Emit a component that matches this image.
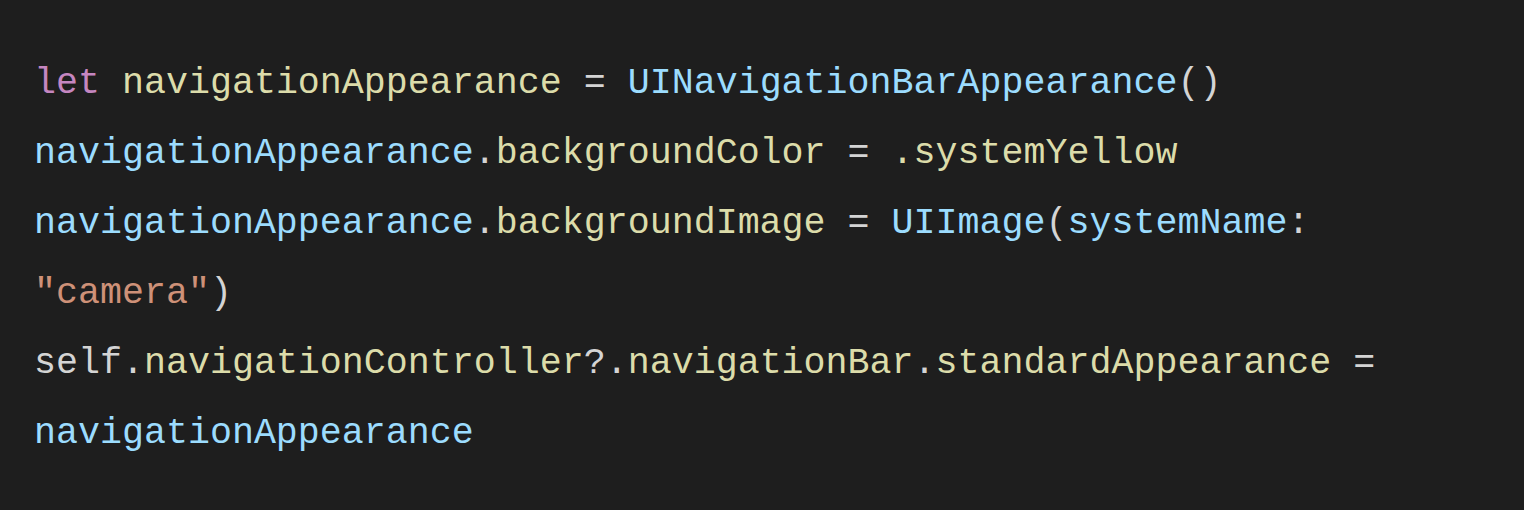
import React from "react";

const K = ({ c, children }: { c: string; children: React.ReactNode }) => (
  <span className={c}>{children}</span>
);

export default function App() {
  const kw = "text-[#c586c0]";
  const fn = "text-[#dcdcaa]";
  const vr = "text-[#9cdcfe]";
  const st = "text-[#ce9178]";
  const pn = "text-[#d4d4d4]";
  return (
    <div className="w-[1524px] h-[510px] bg-[#1e1e1e] pt-[48px] pl-[34px] font-['Liberation_Mono',monospace] text-[36.65px] leading-[70px] whitespace-pre">
      <div>
        <K c={kw}>let</K>
        <K c={pn}> </K>
        <K c={fn}>navigationAppearance</K>
        <K c={pn}> = </K>
        <K c={vr}>UINavigationBarAppearance</K>
        <K c={pn}>()</K>
      </div>
      <div>
        <K c={vr}>navigationAppearance</K>
        <K c={pn}>.</K>
        <K c={fn}>backgroundColor</K>
        <K c={pn}> = </K>
        <K c={fn}>.systemYellow</K>
      </div>
      <div>
        <K c={vr}>navigationAppearance</K>
        <K c={pn}>.</K>
        <K c={fn}>backgroundImage</K>
        <K c={pn}> = </K>
        <K c={vr}>UIImage</K>
        <K c={pn}>(</K>
        <K c={vr}>systemName</K>
        <K c={pn}>:</K>
      </div>
      <div>
        <K c={st}>"camera"</K>
        <K c={pn}>)</K>
      </div>
      <div>
        <K c={pn}>self</K>
        <K c={pn}>.</K>
        <K c={fn}>navigationController</K>
        <K c={pn}>?.</K>
        <K c={fn}>navigationBar</K>
        <K c={pn}>.</K>
        <K c={fn}>standardAppearance</K>
        <K c={pn}> =</K>
      </div>
      <div>
        <K c={vr}>navigationAppearance</K>
      </div>
    </div>
  );
}
